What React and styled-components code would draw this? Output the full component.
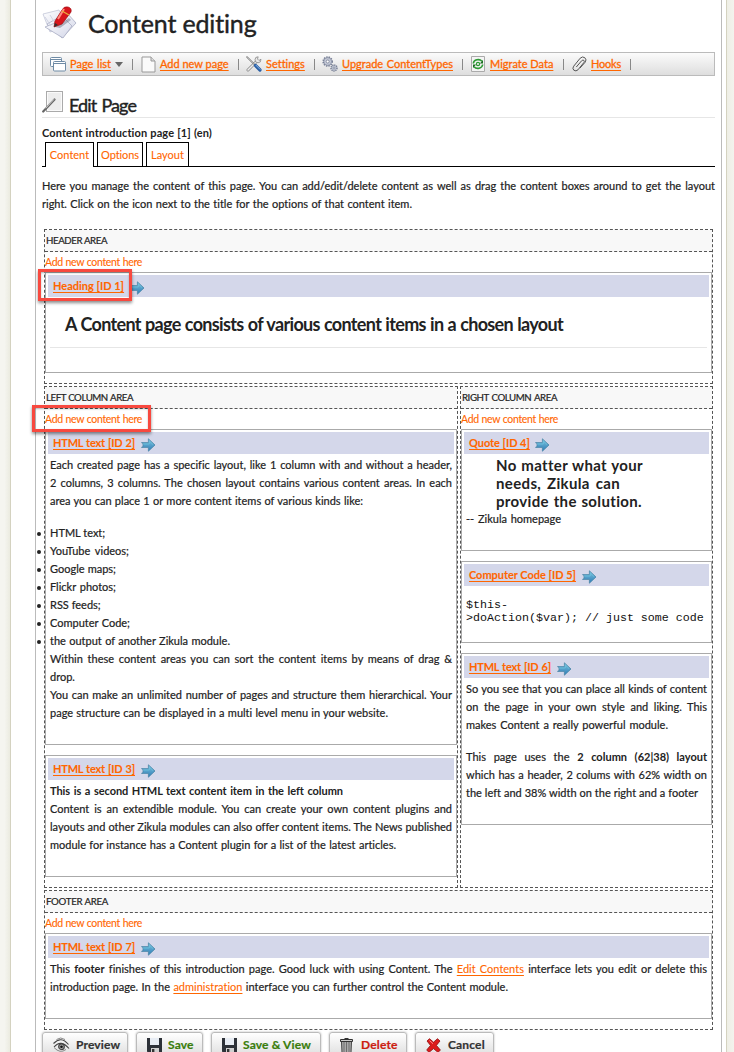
import React from 'react';
import styled, { createGlobalStyle } from 'styled-components';

const Global = createGlobalStyle`
  * { box-sizing: border-box; }
  body { margin: 0; background: #fff; }
`;
const Shell = styled.div`
  display: flex; width: 734px; height: 1052px; overflow: hidden; position: relative;
  font: 11px/18px Lato, "Liberation Sans", sans-serif; color: #222;
  font-variant-ligatures: none; -webkit-text-stroke: .2px;
`;
const Strip = styled.div`
  flex: none; width: ${p => p.$w}px;
  background: ${p => p.$right ? 'linear-gradient(90deg,#eeeee5,#f4f4ee)' : 'linear-gradient(90deg,#f5f5f0 45%,#ebebe0)'};
  border-${p => p.$right ? 'left' : 'right'}: 1px solid #d4d2c0;
`;
const Main = styled.main`
  flex: none; width: 687px; margin: 0 4px 0 24px; padding: 0 6px;
  border: solid #bbb; border-width: 0 1px;
`;
const Fit = styled.span`
  display: ${p => p.$block ? 'block' : 'inline-block'}; white-space: nowrap; text-align-last: justify;
  width: ${p => p.$w ? p.$w + 'px' : 'auto'}; letter-spacing: ${p => p.$ls || 0}px;
`;
const PageHead = styled.header`
  display: flex; height: 52px; padding-top: 5px; gap: 10px; align-items: flex-start;
`;
const Title = styled.h1`margin: 0; font-size: 25px; font-weight: 400; line-height: 37px; -webkit-text-stroke: .4px;`;
const Toolbar = styled.nav`
  display: flex; align-items: center; height: 24px; border: 1px solid #bbb; padding-left: 7px;
  background: linear-gradient(#fbfbfb,#dedede);
`;
const ToolItem = styled.div`
  display: flex; align-items: center; width: ${p => p.$w}px; height: 22px; padding-left: ${p => p.$pl || 0}px; position: relative;
  svg { flex: none; margin-right: ${p => p.$gap || 4}px; }
  &::after { content: ""; position: absolute; right: 0; top: 6px; width: 1px; height: 11px; background: #888; }
`;
const Link = styled.a`
  color: #f60; white-space: nowrap; font-weight: ${p => p.$bold ? 700 : 400};
  &, & ${Fit} {
    text-decoration: ${p => p.$plain ? 'none' : 'underline'}; text-underline-offset: 2px; text-decoration-thickness: 1px;
    text-decoration-skip-ink: none;
  }
  -webkit-text-stroke: ${p => p.$stroke || .1}px;
`;
const Caret = styled.span`border: 4px solid transparent; border-top: 5px solid #666; border-bottom: 0; margin-left: 4px;`;
const SubHead = styled.div`
  display: flex; height: 42px; border-bottom: 1px solid #e6e6e6; padding-top: 15px; gap: 6px;
  h2 { margin: 3px 0 0; font-size: 18px; line-height: 22px; font-weight: 400; -webkit-text-stroke: .4px #222; }
`;
const PageName = styled.div`margin-top: 6px; font-weight: 700; height: 18px; -webkit-text-stroke: 0;`;
const Tabs = styled.div`display: flex; height: 25px; gap: 3px; padding-left: 3px; border-bottom: 1px solid #000;`;
const Tab = styled.div`
  width: ${p => p.$w}px; height: ${p => p.$on ? 25 : 24}px; border: 1px solid #000; border-bottom: 0;
  background: #fff; text-align: center; line-height: 24px;
`;
const Para = styled.div`
  margin-top: ${p => p.$top || 0}px;
`;
const Grid = styled.div`padding: 16px 0 0 2px; width: 671px; display: flex; flex-direction: column; gap: 2px;`;
const Columns = styled.div`display: flex; gap: 2px;`;
const AreaBox = styled.section`width: ${p => p.$w}px; border: 1px dashed #555;`;
const AreaTitle = styled.div`
  height: 22px; line-height: 21px; background: #f8f8f8; border-bottom: 1px dashed #555; padding-left: 1px; font-size: 9.7px;
`;
const AddRow = styled.div`height: 20px; line-height: 20px; font-size: 10.5px;`;
const Item = styled.article`
  height: ${p => p.$h}px; border: 1px solid #aaa; padding: 2px; margin-bottom: 10px;
`;
const ItemBar = styled.div`
  height: 22px; background: #d4d7ea; display: flex; align-items: center; padding-left: 5px; gap: 6px;
  svg { margin-top: 3px; }
`;
const ItemBody = styled.div`padding: 2px 2px 0; b { -webkit-text-stroke: 0; }`;
const List = styled.ul`margin: 14px 0 0; padding: 0; list-style: none;`;
const Bullet = styled.li`
  height: 18px; position: relative;
  &::before { content: ""; position: absolute; left: -13.5px; top: 7.5px; width: 4px; height: 4px; border-radius: 50%; background: #222; }
`;
const BigHeading = styled.h3`
  margin: 8px 0 0; height: 41px; padding-left: 15px; border-bottom: 1px solid #e6e6e6;
  font-size: 18px; line-height: 34px; -webkit-text-stroke: 0;
`;
const Quote = styled.blockquote`margin: 0 0 0 30px; font-size: 15px; font-weight: 700; height: 54px; -webkit-text-stroke: 0;`;
const Code = styled.pre`margin: 11px 0 0; font: 11.67px/13px "Liberation Mono", monospace; color: #111; -webkit-text-stroke: 0;`;
const Buttons = styled.div`display: flex; gap: 8px; margin-top: 2px;`;
const Button = styled.button`
  width: ${p => p.$w}px; height: 26px; padding: 0 0 0 10px; display: flex; align-items: center; gap: ${p => p.$gap || 6}px;
  border: 1px solid #bbb; border-radius: 3px; background: linear-gradient(#fff,#ddd); box-shadow: 0 0 2px #aaa;
  font: 700 12px/18px Lato, sans-serif; color: ${p => p.$c || '#333'}; white-space: nowrap; letter-spacing: .15px;
  -webkit-text-stroke: .2px;
`;
const Mark = styled.div`
  position: absolute; left: ${p => p.$x}px; top: ${p => p.$y}px; width: ${p => p.$w}px; height: ${p => p.$h}px;
  border: 3px solid #f8493f; box-shadow: 0 2px 3px rgba(0,0,0,.45), inset 0 1px 2px rgba(0,0,0,.3);
`;

const Arrow = () => (
  <svg width="15" height="14" viewBox="0 0 15 14">
    <defs><linearGradient id="ar" x2="0" y2="1"><stop stopColor="#7fc4dc" /><stop offset="1" stopColor="#2d7db8" /></linearGradient></defs>
    <path d="M.5 4.600H7.400V.8L14 7l-6.600 6.200V9.400H.5L2 8.600V5.400Z" fill="url(#ar)" stroke="#4d86a8" strokeWidth=".8" />
    <path d="M2 6H8.300V3L12 6.600" fill="none" stroke="#6fc4de" strokeWidth=".7" />
  </svg>
);
const PagesPen = () => (
  <svg width="36" height="36" viewBox="0 0 36 36">
    <defs><linearGradient id="pg" x2="1" y2="1"><stop stopColor="#fff" /><stop offset="1" stopColor="#d3d6e8" /></linearGradient></defs>
    <path d="M1 9 17 5l8 15L8 27Z" fill="url(#pg)" stroke="#c3c6d8" strokeWidth=".8" />
    <path d="M5 19 25 8l9 10-14 15Z" fill="url(#pg)" stroke="#a9adc4" strokeWidth=".8" />
    <path d="m3 22 20-8 7 7-9 12Z" fill="url(#pg)" stroke="#a9adc4" strokeWidth=".8" />
    <path d="M3 12l6 9M8 10l5 8" stroke="#d0d3e2" fill="none" />
    <path d="M13 22 27 13l2 2-11 8Z" fill="#5f6478" opacity=".45" />
    <path d="m12 22 1-6 7-11q2-4 6-3 4 1 3 5L20 19Z" fill="#d8151c" stroke="#9d1016" strokeWidth=".7" />
    <path d="m16 14 6-10" stroke="#ff8a80" strokeWidth="2" /><path d="m20 6 7 4" stroke="#e9b23b" strokeWidth="1.300" />
    <path d="m12 22 1-4 3 2Z" fill="#333" />
  </svg>
);
const Windows = () => (
  <svg width="16" height="15" viewBox="0 0 16 15" fill="#fff" stroke="#6f8ba5">
    <rect x=".5" y=".5" width="11" height="9" rx="1" /><path d="M1 2.500h10" />
    <rect x="3.500" y="4.500" width="12" height="9.500" rx="1" /><path d="M4 6.500h11" />
  </svg>
);
const Sheet = () => (
  <svg width="15" height="17" viewBox="0 0 15 17">
    <path d="M1 1h9l4 4v11H1Z" fill="#fafafa" stroke="#999" /><path d="M10 1v4h4" fill="#ddd" stroke="#999" />
  </svg>
);
const Tools = () => (
  <svg width="16" height="16" viewBox="0 0 16 16" fill="none" strokeLinecap="round">
    <path d="m2 14 9-9" stroke="#888" strokeWidth="3" /><path d="m2 14 9-9" stroke="#eee" strokeWidth="1.500" />
    <path d="M15 3.600A3 3 0 1 1 12.200.8l-.7 2.200 1.200 1.200Z" fill="#e8e8e8" stroke="#888" strokeWidth=".8" />
    <path d="m1 1 7 7" stroke="#777" strokeWidth="1.600" /><path d="m1.500 1.500 6 6" stroke="#ddd" strokeWidth=".6" /><path d="m9.500 9.500 4.500 4.500" stroke="#2a5fa5" strokeWidth="3.200" /><path d="m10 9.300 4 4" stroke="#86b5e8" />
  </svg>
);
const Gears = () => (
  <svg width="16" height="16" viewBox="0 0 16 16" fill="#c3c8d6" stroke="#777f94">
    <circle cx="5.700" cy="5.500" r="4.500" strokeWidth="1.600" strokeDasharray="1.400 1" /><circle cx="5.700" cy="5.500" r="3.800" strokeWidth=".5" /><circle cx="5.700" cy="5.500" r="1.500" fill="#fff" strokeWidth=".8" />
    <circle cx="12" cy="12" r="3" strokeWidth="1.500" strokeDasharray="1.200 .8" /><circle cx="12" cy="12" r="1" fill="#fff" strokeWidth=".8" />
  </svg>
);
const Migrate = () => (
  <svg width="14" height="16" viewBox="0 0 14 16">
    <path d="M.5.5h13v15H.5Z" fill="#f4f4f4" stroke="#aaa" />
    <g fill="none" stroke="#2d9a34" strokeWidth="1.600"><path d="M2.300 7.500a4.900 4.300 0 0 1 8.700-2.200M11.700 8.500a4.900 4.300 0 0 1-8.700 2.200" /><circle cx="7" cy="8" r="1.600" strokeWidth="1.200" /></g>
    <path d="M12 4v3.500H8.800ZM2 12V8.500h3.200Z" fill="#1c6d22" />
  </svg>
);
const Clip = () => (
  <svg width="15" height="16" viewBox="0 0 15 16" fill="none" stroke="#555" strokeWidth="1">
    <path d="M4.300 11 9.600 4.800q1.400-1.300 2.300-.4t-.1 2.200L6 13.800q-2 2-4.200.4-1.800-1.800-.1-4l6.500-8q2.200-2.200 4.600-.5 2.300 2 .3 4.600L8 12" />
  </svg>
);
const EditIcon = () => (
  <svg width="21" height="22" viewBox="0 0 21 22">
    <rect x="4.500" y=".5" width="16" height="20" fill="#fafafa" stroke="#aaa" /><path d="M6 2h13v17H6Z" fill="#ededed" />
    <path d="M1.200 20.500 12.500 8.500" stroke="#666" strokeWidth="2.200" strokeLinecap="round" /><path d="m3.500 17.300 8.500-9" stroke="#ddd" />
  </svg>
);
const Eye = () => (
  <svg width="17" height="16" viewBox="0 0 17 16" fill="none" stroke="#444">
    <path d="M.5 6.500Q8-1.500 15.500 7.500M1 10q7-8 15 1.500" strokeWidth="1.100" /><circle cx="8.500" cy="9.700" r="2.800" fill="#aaa" strokeWidth="1.200" /><circle cx="8.500" cy="9.700" r="1.300" fill="#111" stroke="none" />
    <path d="M1 10.500q6 6.500 12 2M3.500 2.500q4-3 8.500 0" stroke="#888" />
  </svg>
);
const Floppy = () => (
  <svg width="15" height="15" viewBox="0 0 15 15">
    <path d="M0 0h15v15H1.500L0 13.500Z" fill="#2d3138" /><path d="M3 0h9v7H3Z" fill="#e8edf4" /><path d="M4 10h8v5H4Z" fill="#d0d0d0" /><path d="M5 11h2.400v4H5Z" fill="#333" />
  </svg>
);
const Trash = () => (
  <svg width="13" height="15" viewBox="0 0 13 15">
    <path d="M1.500 3.500h10L11 14.500H2Z" fill="#aaa" stroke="#444" /><path d="M4 4v10M6.500 4v10M9 4v10" stroke="#666" strokeWidth=".9" /><path d="M.5 1.500h12v2H.5Z" fill="#ccc" stroke="#333" /><path d="M4.500.5h4" stroke="#333" />
  </svg>
);
const Cross = () => (
  <svg width="15" height="15" viewBox="0 0 15 15">
    <path d="m1 3 2.500-2.300 4 3.500 4-3.500L14 3l-3.600 4.400L14.400 12 12 14.400 7.500 10.600 3 14.400.7 12l3.800-4.600Z" fill="#dc1c1c" stroke="#8e0d0d" strokeWidth=".8" /><path d="m3.500 2.500 3.500 3.200" stroke="#ff8c8c" />
  </svg>
);

const Lines = ({ w, rows, ls = 0 }) => rows.map((r, i) => {
  const [text, width, spacing] = Array.isArray(r) ? r : [r, w];
  return <Fit $block key={i} $w={width} $ls={spacing ?? ls}>{text}</Fit>;
});
const Area = ({ title, tw, ls = 0, w, children }) => (
  <AreaBox $w={w}>
    <AreaTitle><Fit $w={tw} $ls={ls}>{title}</Fit></AreaTitle>
    <AddRow><Link $plain><Fit $w={97} $ls={-.33}>Add new content here</Fit></Link></AddRow>
    {children}
  </AreaBox>
);
const ContentItem = ({ title, tw, ls = -.2, h, children }) => (
  <Item $h={h}>
    <ItemBar><Link $bold><Fit $w={tw} $ls={ls}>{title}</Fit></Link><Arrow /></ItemBar>
    <ItemBody>{children}</ItemBody>
  </Item>
);

export default function App() {
  return (
    <Shell>
      <Global />
      <Strip $w={11} />
      <Main>
        <PageHead><PagesPen /><Title><Fit $w={168} $ls={-.15}>Content editing</Fit></Title></PageHead>
        <Toolbar>
          <ToolItem $w={83}><Windows /><Link $stroke={.3}><Fit $w={41}>Page list</Fit></Link><Caret /></ToolItem>
          <ToolItem $w={106} $pl={8}><Sheet /><Link $stroke={.3}><Fit $w={68}>Add new page</Fit></Link></ToolItem>
          <ToolItem $w={76} $pl={7}><Tools /><Link $stroke={.3}>Settings</Link></ToolItem>
          <ToolItem $w={148} $pl={7}><Gears /><Link $stroke={.3}><Fit $w={111}>Upgrade ContentTypes</Fit></Link></ToolItem>
          <ToolItem $w={101} $gap={5} $pl={8}><Migrate /><Link $stroke={.3}><Fit $w={63}>Migrate Data</Fit></Link></ToolItem>
          <ToolItem $w={67} $pl={8}><Clip /><Link $stroke={.3}><Fit $ls={-.2}>Hooks</Fit></Link></ToolItem>
        </Toolbar>
        <SubHead><EditIcon /><h2><Fit $w={67} $ls={-.9}>Edit Page</Fit></h2></SubHead>
        <PageName><Fit $w={170} $ls={.1}>Content introduction page [1] (en)</Fit></PageName>
        <Tabs>
          <Tab $w={49} $on><Link $plain>Content</Link></Tab>
          <Tab $w={46}><Link $plain><Fit $ls={-.1}>Options</Fit></Link></Tab>
          <Tab $w={43}><Link $plain>Layout</Link></Tab>
        </Tabs>
        <Para $top={10}>
          <Lines w={673} rows={[
            'Here you manage the content of this page. You can add/edit/delete content as well as drag the content boxes around to get the layout',
            ['right. Click on the icon next to the title for the options of that content item.', 370]]} />
        </Para>
        <Grid>
          <Area title="HEADER AREA" tw={61} ls={-.4} w={669}>
            <ContentItem title="Heading [ID 1]" tw={71} ls={0} h={101}>
              <BigHeading><Fit $w={498} $ls={-.66}>A Content page consists of various content items in a chosen layout</Fit></BigHeading>
            </ContentItem>
          </Area>
          <Columns>
            <Area title="LEFT COLUMN AREA" tw={87} ls={-.47} w={414}>
              <ContentItem title="HTML text [ID 2]" tw={82} h={316}>
                <Lines w={402} rows={[
                  'Each created page has a specific layout, like 1 column with and without a header,',
                  '2 columns, 3 columns. The chosen layout contains various content areas. In each',
                  ['area you can place 1 or more content items of various kinds like:', 313]]} />
                <List>
                  {[['HTML text;', 53], ['YouTube videos;', 79], ['Google maps;', 66], ['Flickr photos;', 66], ['RSS feeds;', 49], ['Computer Code;', 80], ['the output of another Zikula module.', 180]]
                    .map(([t, w]) => <Bullet key={t}><Fit $w={w}>{t}</Fit></Bullet>)}
                </List>
                <Lines w={402} rows={[
                  'Within these content areas you can sort the content items by means of drag &',
                  ['drop.', 26],
                  'You can make an unlimited number of pages and structure them hierarchical. Your',
                  ['page structure can be displayed in a multi level menu in your website.', 338]]} />
              </ContentItem>
              <ContentItem title="HTML text [ID 3]" tw={82} h={122}>
                <b><Lines rows={[['This is a second HTML text content item in the left column', 293, -.05]]} /></b>
                <Lines w={402} rows={[
                  'Content is an extendible module. You can create your own content plugins and',
                  'layouts and other Zikula modules can also offer content items. The News published',
                  ['module for instance has a Content plugin for a list of the latest articles.', 346]]} />
              </ContentItem>
            </Area>
            <Area title="RIGHT COLUMN AREA" tw={95} ls={-.45} w={253}>
              <ContentItem title="Quote [ID 4]" tw={60} ls={-.05} h={122}>
                <Quote><Lines ls={.35} rows={[['No matter what your', 147], ['needs, Zikula can', 124], ['provide the solution.', 146]]} /></Quote>
                <Fit $w={95}>-- Zikula homepage</Fit>
              </ContentItem>
              <ContentItem title="Computer Code [ID 5]" tw={107} ls={-.05} h={82}>
                <Code>{'$this-\n>doAction($var); // just some code'}</Code>
              </ContentItem>
              <ContentItem title="HTML text [ID 6]" tw={82} h={172}>
                <Lines w={241} rows={[
                  'So you see that you can place all kinds of content',
                  'on the page in your own style and liking. This',
                  ['makes Content a really powerful module.', 202]]} />
                <Para $top={14}>
                  <Lines w={241} rows={[
                    <>This page uses the <b>2 column (62|38) layout</b></>,
                    'which has a header, 2 colums with 62% width on',
                    ['the left and 38% width on the right and a footer', 232]]} />
                </Para>
              </ContentItem>
            </Area>
          </Columns>
          <Area title="FOOTER AREA" tw={62} ls={-.3} w={669}>
            <ContentItem title="HTML text [ID 7]" tw={82} h={86}>
              <Lines w={657} rows={[
                <>This <b>footer</b> finishes of this introduction page. Good luck with using Content. The <Link>Edit Contents</Link> interface lets you edit or delete this</>,
                [<>introduction page. In the <Link>administration</Link> interface you can further control the Content module.</>, 458]]} />
            </ContentItem>
          </Area>
        </Grid>
        <Buttons>
          <Button $w={86}><Eye />Preview</Button>
          <Button $w={67} $c="#3a7d0c"><Floppy />Save</Button>
          <Button $w={110} $c="#3a7d0c"><Floppy />Save &amp; View</Button>
          <Button $w={78} $c="#cc2010" $gap={8}><Trash />Delete</Button>
          <Button $w={79} $gap={7}><Cross />Cancel</Button>
        </Buttons>
      </Main>
      <Strip $w={8} $right />
      <Mark $x={38} $y={269} $w={94} $h={32} />
      <Mark $x={32} $y={405} $w={119} $h={27} />
    </Shell>
  );
}
